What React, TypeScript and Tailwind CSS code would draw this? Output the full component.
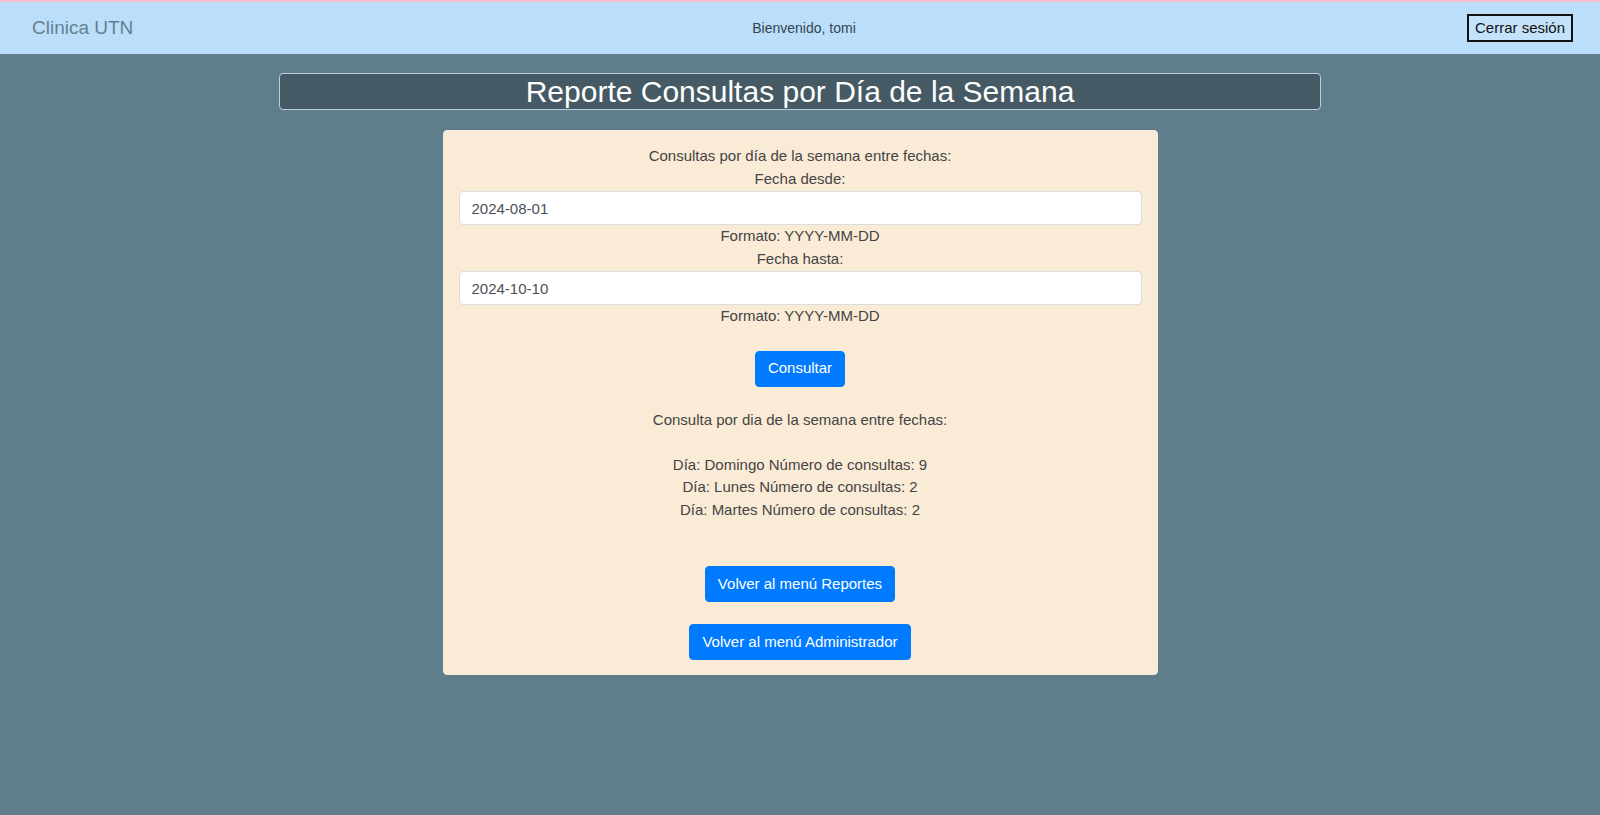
import React from 'react';

// Report rows shown under the query form
const rows = [
  { day: 'Domingo', count: 9 },
  { day: 'Lunes', count: 2 },
  { day: 'Martes', count: 2 },
];

function Navbar() {
  return (
    <nav className="grid grid-cols-3 items-center h-[54px] pl-[32px] pr-[27px] bg-[#bbdefb] border-t-2 border-[#f8bbd0]">
      <span className="text-[19px] text-[#64808f]">Clinica UTN</span>
      <span className="text-center text-[14px] text-[#34444f] pl-[3px]">Bienvenido, tomi</span>
      <div className="flex justify-end">
        <button className="flex items-center justify-center h-[28px] px-[6px] border-2 border-[#111] bg-[#c4e2fa] text-[15px] text-[#111]">
          Cerrar sesión
        </button>
      </div>
    </nav>
  );
}

function PrimaryButton({ label, className = '' }: { label: string; className?: string }) {
  return (
    <button className={`h-[36px] px-[12px] rounded-[4px] bg-[#007bff] text-white text-[15px] leading-[22.5px] border border-[#007bff] ${className}`}>
      {label}
    </button>
  );
}

function DateField({ value }: { value: string }) {
  return (
    <input
      readOnly
      value={value}
      className="block w-full h-[34px] mt-[1px] px-[12px] rounded-[4px] bg-white border border-[#dcdcdc] text-[15px] text-[#495057] outline-none"
    />
  );
}

export default function App() {
  return (
    <div className="min-h-screen bg-[#607d8b] font-['Liberation_Sans',Arial,sans-serif]">
      <Navbar />

      {/* Page title */}
      <h2 className="w-[1042px] mx-auto mt-[19px] border border-[#b9cfdd] rounded-[4px] bg-[#455a64] text-center text-white text-[30px] leading-[35px]">
        Reporte Consultas por Día de la Semana
      </h2>

      {/* Report card */}
      <div className="w-[715px] mx-auto mt-[20px] pt-[14px] pb-[14px] px-[15px] rounded-[4px] bg-[#faebd7] border border-[#f1ebe2] text-center text-[15px] leading-[22.5px] text-[#444]">
        <p>Consultas por día de la semana entre fechas:</p>
        <p>Fecha desde:</p>
        <DateField value="2024-08-01" />
        <p>Formato: YYYY-MM-DD</p>
        <p>Fecha hasta:</p>
        <DateField value="2024-10-10" />
        <p>Formato: YYYY-MM-DD</p>

        <PrimaryButton label="Consultar" className="mt-[23px] h-[35px]" />

        <p className="mt-[22px]">Consulta por dia de la semana entre fechas:</p>
        <div className="h-[22.5px]" />
        {rows.map((r) => (
          <p key={r.day}>
            Día: {r.day} Número de consultas: {r.count}
          </p>
        ))}

        <div className="mt-[45px]">
          <PrimaryButton label="Volver al menú Reportes" />
        </div>
        <div className="mt-[22px]">
          <PrimaryButton label="Volver al menú Administrador" />
        </div>
      </div>
    </div>
  );
}
